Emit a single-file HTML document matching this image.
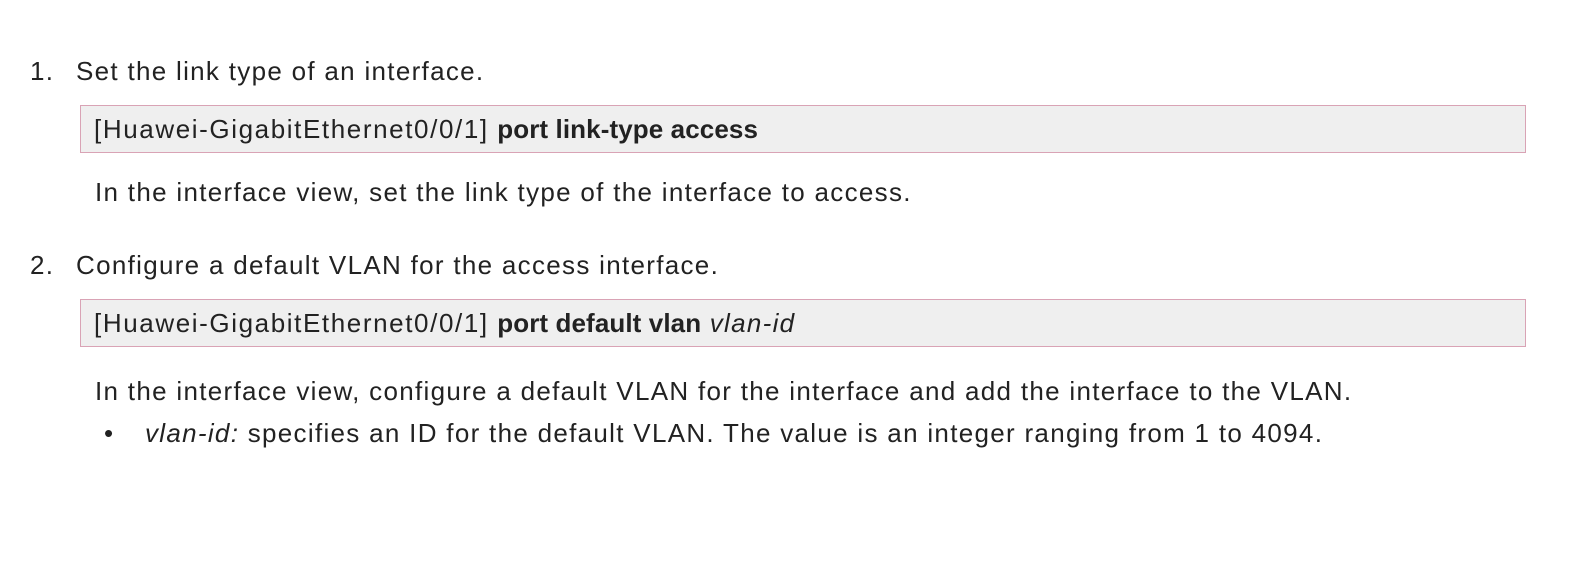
<!DOCTYPE html>
<html><head><meta charset="utf-8"><style>
body{margin:0;width:1573px;height:575px;background:#fff;position:relative;overflow:hidden;font-family:"Liberation Sans",sans-serif;color:#222;font-size:26px;}
.l{position:absolute;white-space:nowrap;line-height:30px;letter-spacing:1.3px}
.box{position:absolute;left:80px;width:1444px;height:46px;background:#efefef;border:1px solid #d9a3b5;}
.c{letter-spacing:1.6px}
b{font-weight:bold;letter-spacing:0.1px}
</style></head><body>
<div class="l" style="left:30px;top:56px">1.</div>
<div class="l" style="left:76px;top:56px">Set the link type of an interface.</div>
<div class="box" style="top:105px"></div>
<div class="l" style="left:94px;top:114px"><span class="c">[Huawei-GigabitEthernet0/0/1]</span> <b>port link-type access</b></div>
<div class="l" style="left:95px;top:177px">In the interface view, set the link type of the interface to access.</div>
<div class="l" style="left:30px;top:250px">2.</div>
<div class="l" style="left:76px;top:250px">Configure a default VLAN for the access interface.</div>
<div class="box" style="top:299px"></div>
<div class="l" style="left:94px;top:308px"><span class="c">[Huawei-GigabitEthernet0/0/1]</span> <b>port default vlan</b> <i>vlan-id</i></div>
<div class="l" style="left:95px;top:376px">In the interface view, configure a default VLAN for the interface and add the interface to the VLAN.</div>
<div class="l" style="left:104px;top:418px">•</div>
<div class="l" style="left:145px;top:418px"><i>vlan-id:</i> specifies an ID for the default VLAN. The value is an integer ranging from 1 to 4094.</div>
</body></html>
